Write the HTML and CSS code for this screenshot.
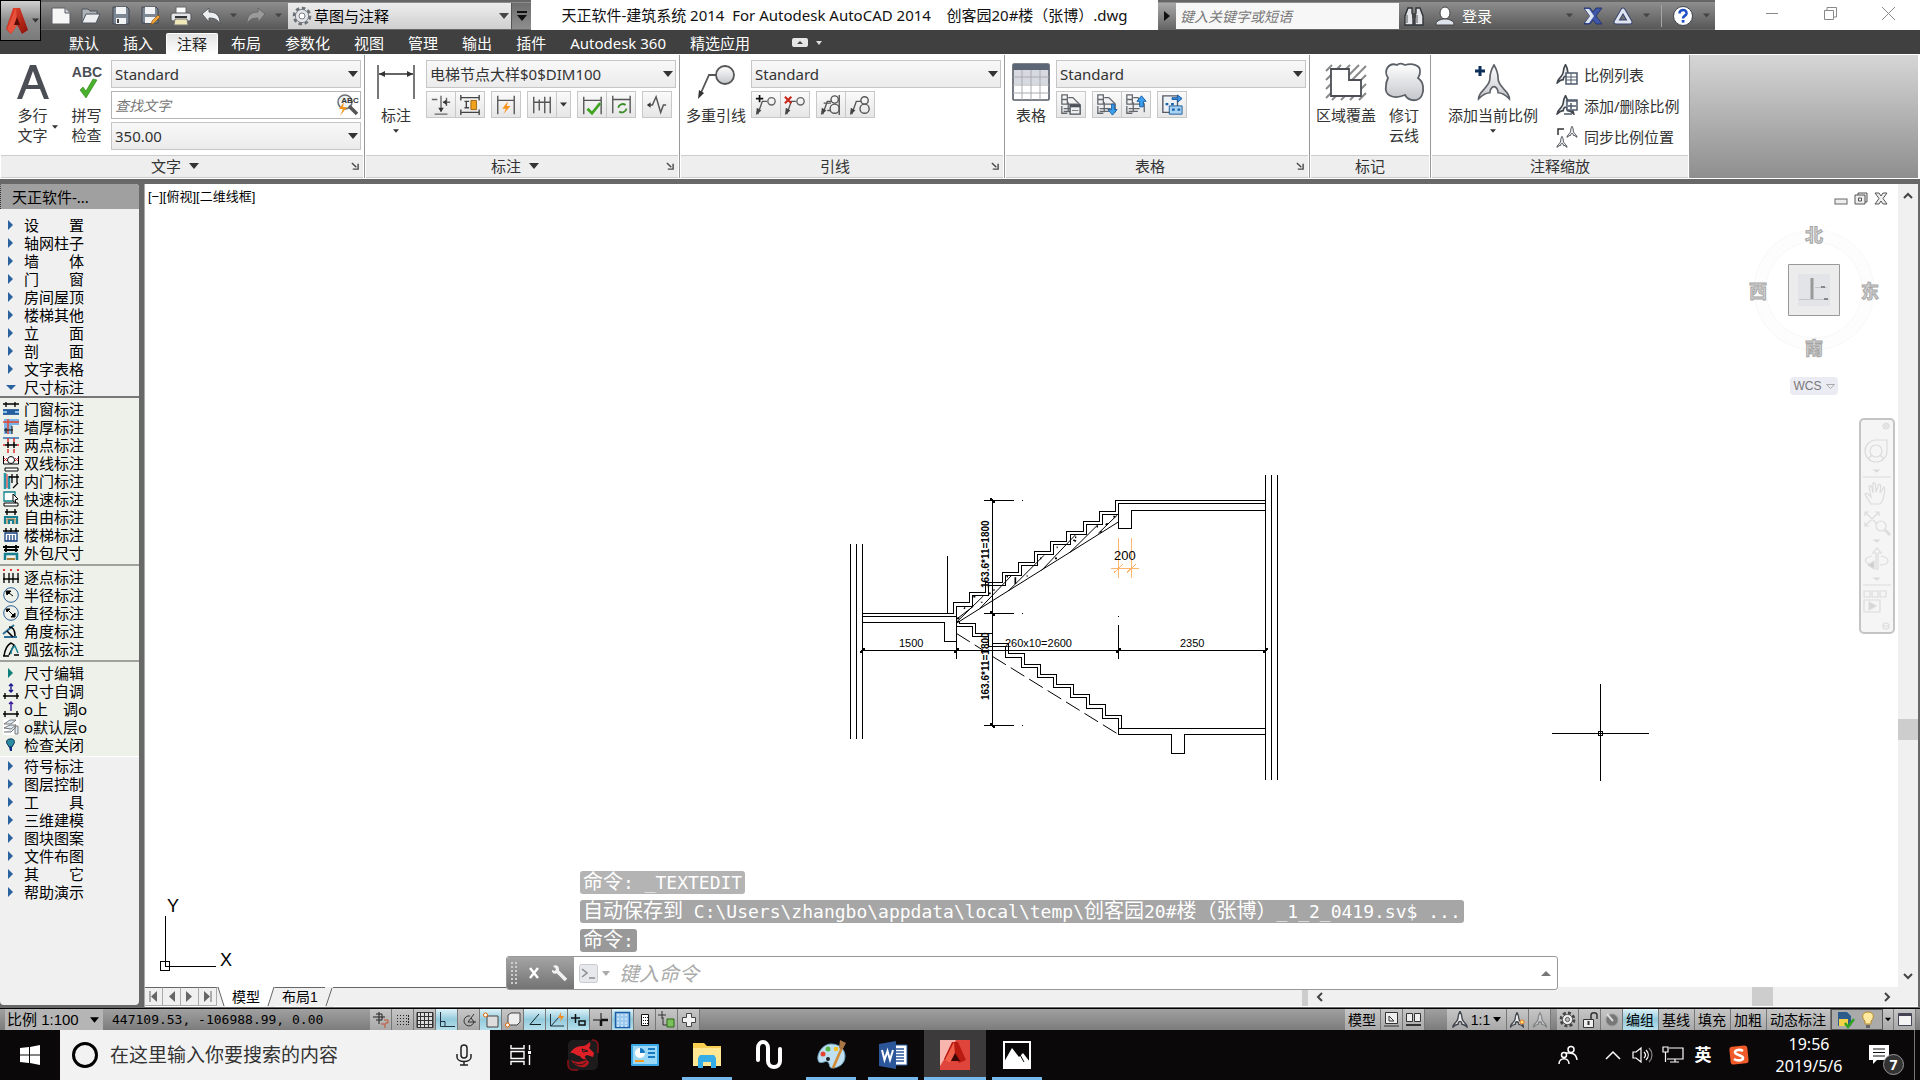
FILE: index.html
```html
<!DOCTYPE html>
<html lang="zh-CN">
<head>
<meta charset="utf-8">
<title>天正软件-建筑系统 2014</title>
<link rel="stylesheet" href="styles.css">
</head>
<body>
<svg class="defs" aria-hidden="true">
  <defs>
    <linearGradient id="steel" x1="0" y1="0" x2="0" y2="1"><stop offset="0" stop-color="#fff"/><stop offset="1" stop-color="#c3c6cb"/></linearGradient>
    <linearGradient id="redg" x1="0" y1="0" x2="1" y2="1"><stop offset="0" stop-color="#ef4a32"/><stop offset="1" stop-color="#8c1008"/></linearGradient>
    <symbol id="down" viewBox="0 0 10 6"><path d="M0 0h10L5 6z" fill="currentColor"/></symbol>
    <symbol id="launch" viewBox="0 0 9 9"><path d="M1 1l5 5M8 2v6H2" fill="none" stroke="#4a4a4a" stroke-width="1.6"/></symbol>
    <symbol id="star" viewBox="0 0 32 36"><path d="M16 1c3 5 4 9 4 13 0 5 3 7 6 11 3 3 5 6 5 9-4-4-8-6-11-6 0-3-2-6-4-6s-4 3-4 6c-3 0-7 2-11 6 0-3 2-6 5-9 3-4 6-6 6-11 0-4 1-8 4-13z" fill="url(#steel)" stroke="#5c6168" stroke-width="1.6"/></symbol>
    <symbol id="star-s" viewBox="0 0 32 36"><path d="M16 1c3 5 4 9 4 13 0 5 3 7 6 11 3 3 5 6 5 9-4-4-8-6-11-6 0-3-2-6-4-6s-4 3-4 6c-3 0-7 2-11 6 0-3 2-6 5-9 3-4 6-6 6-11 0-4 1-8 4-13z" fill="#eceef0" stroke="#42474e" stroke-width="3"/></symbol>
    <symbol id="cells" viewBox="0 0 24 24"><path d="M2 1h6v5H2zM2 6h6v5H2zM9 4h5l7 7v9M8 11h11M2 13v8h6M4 16h12M4 19h10M9 9v11" fill="none" stroke="#62676e" stroke-width="1.4"/></symbol>
    <symbol id="mleader" viewBox="0 0 24 24"><path d="M3 22L8 8h5" fill="none" stroke="#555" stroke-width="1.5"/><path d="M1 23l1-8 5 3z" fill="#444"/></symbol>
  </defs>
</svg>

<header class="titlebar">
  <button class="app-button" aria-label="应用程序菜单">
    <svg width="24" height="28" viewBox="0 0 24 28"><path d="M8 1h7l8 22-6 4-5-9-6 9-5-5z" fill="url(#redg)"/><path d="M11 1L2 22l4 5 6-9z" fill="#e8523c"/><path d="M12 10l3 8H9z" fill="#5a0a05"/></svg>
    <svg class="tiny" width="7" height="5"><use href="#down"/></svg>
  </button>
  <div class="qat">
    <button aria-label="新建"><svg width="20" height="20" viewBox="0 0 20 20"><path d="M1 2h13l5 5v11H1z" fill="#f6f6f6" stroke="#5b5f66"/><path d="M14 2v5h5" fill="#d0d2d6" stroke="#5b5f66"/></svg></button>
    <button aria-label="打开"><svg width="20" height="20" viewBox="0 0 20 20"><path d="M1 16V3h6l2 2h7v3" fill="#aeb3ba" stroke="#4f545b"/><path d="M1 17L5 8h14l-4 9z" fill="#eceef0" stroke="#4f545b"/></svg></button>
    <button aria-label="保存"><svg width="20" height="20" viewBox="0 0 20 20"><path d="M2 1h14l2 2v15H2z" fill="#7d8793" stroke="#3e444d"/><path d="M5 1h10v7H5zM5 12h10v6H5z" fill="#f2f3f5"/><path d="M7 13v4" stroke="#444" stroke-width="2"/></svg></button>
    <button aria-label="另存为"><svg width="20" height="20" viewBox="0 0 20 20"><path d="M1 1h14l2 2v14H1z" fill="#7d8793" stroke="#3e444d"/><path d="M4 1h10v7H4zM4 11h10v6H4z" fill="#f2f3f5"/><path d="M10 19l1-4 6-6 2 2-6 6z" fill="#f4a33a" stroke="#8a5410" stroke-width=".7"/></svg></button>
    <button aria-label="打印"><svg width="22" height="20" viewBox="0 0 22 20"><path d="M6 1h10v7H6z" fill="#fff" stroke="#666"/><rect x="1" y="7" width="20" height="8" rx="2" fill="#e2e4e8" stroke="#555"/><path d="M5 11h12" stroke="#333" stroke-width="2"/><path d="M5 13h12l1 6H4z" fill="#f0e8b8" stroke="#777"/></svg></button>
    <button aria-label="放弃"><svg width="20" height="18" viewBox="0 0 20 18"><path d="M1 7l7-6v4c7 0 11 3 11 12-2-4-5-6-11-6v4z" fill="#eceef0" stroke="#55595f"/></svg></button>
    <svg class="arrow" width="7" height="5"><use href="#down"/></svg>
    <button aria-label="重做"><svg width="20" height="18" viewBox="0 0 20 18"><path d="M19 7l-7-6v4C5 5 1 8 1 17c2-4 5-6 11-6v4z" fill="#9a9a9a" stroke="#686868"/></svg></button>
    <svg class="arrow" width="7" height="5"><use href="#down"/></svg>
    <label class="workspace-pick">
      <svg width="20" height="20" viewBox="0 0 20 20"><circle cx="10" cy="10" r="7.6" fill="#e6e8ea" stroke="#6c7178" stroke-width="3.4" stroke-dasharray="3.4 2.5"/><circle cx="10" cy="10" r="6.6" fill="#e3e5e8" stroke="#7a7f86"/><circle cx="10" cy="10" r="3" fill="#fff" stroke="#7a7f86"/></svg>
      <select aria-label="工作空间"><option>草图与注释</option></select>
      <svg class="sel-arrow" width="10" height="6"><use href="#down"/></svg>
    </label>
    <button class="qat-more" aria-label="自定义"><svg width="10" height="10" viewBox="0 0 10 10"><path d="M0 0h10v2H0zM0 4h10L5 10z" fill="#111"/></svg></button>
  </div>
  <div class="doc-title">天正软件-建筑系统 2014&nbsp; For Autodesk AutoCAD 2014 &nbsp;&nbsp; 创客园20#楼（张博）.dwg</div>
  <div class="infocenter">
    <button class="info-toggle" aria-label="折叠"><svg width="6" height="10" viewBox="0 0 6 10"><path d="M0 0l6 5-6 5z" fill="#111"/></svg></button>
    <input type="text" placeholder="键入关键字或短语" aria-label="键入关键字或短语">
    <button aria-label="搜索"><svg width="22" height="20" viewBox="0 0 22 20"><path d="M5 2h4v5l1 3v9H2v-9zM13 2h4l3 8v9h-8v-9l1-3z" fill="#e2e4e8" stroke="#2f3338" stroke-width="1.4"/><path d="M9 7h4v5H9z" fill="#444"/><path d="M4 9v8M14 9v8" stroke="#555"/></svg></button>
    <button class="login"><svg width="20" height="20" viewBox="0 0 20 20"><ellipse cx="10" cy="7" rx="5" ry="6" fill="#fff" stroke="#444"/><path d="M1 19c0-4 3-5 7-6h4c4 1 7 2 7 6z" fill="#dfe3ee" stroke="#444"/></svg><span>登录</span></button>
    <svg class="arrow" width="7" height="5"><use href="#down"/></svg>
    <button aria-label="Exchange"><svg width="20" height="18" viewBox="0 0 20 18"><path d="M1 1h6l3 4 3-4h6l-6 8 6 8h-6l-3-4-3 4H1l6-8z" fill="#3f57a8" stroke="#27366e"/><path d="M2 2h4l5 7-5 7H2l5-7z" fill="#dfe6f6"/></svg></button>
    <button aria-label="Autodesk 360"><svg width="20" height="20" viewBox="0 0 20 20"><path d="M10 4L3 16h14z" fill="none" stroke="#39456e" stroke-width="5" stroke-linejoin="round"/><path d="M10 4L3 16h14z" fill="none" stroke="#dfe4f0" stroke-width="3" stroke-linejoin="round"/></svg></button>
    <svg class="arrow" width="7" height="5"><use href="#down"/></svg>
    <span class="rule"></span>
    <button aria-label="帮助"><svg width="22" height="22" viewBox="0 0 22 22"><circle cx="11" cy="11" r="9.5" fill="#fff" stroke="#3c414a"/><path d="M7.500 8.500c0-5 7.500-4.500 7 0-.4 2.500-3.500 2.400-3.500 5" fill="none" stroke="#1f4fc4" stroke-width="2.600"/><path d="M9.700 15h2.800v2.600H9.700z" fill="#1f4fc4"/></svg></button>
    <svg class="arrow" width="7" height="5"><use href="#down"/></svg>
  </div>
  <div class="window-buttons">
    <button aria-label="最小化"><svg width="12" height="12"><path d="M0 6.500h12" stroke="#888"/></svg></button>
    <button aria-label="还原"><svg width="13" height="13"><path d="M.5 3.500h9v9h-9zM3 3V.5h9.500V10H10" fill="none" stroke="#888"/></svg></button>
    <button aria-label="关闭"><svg width="13" height="13"><path d="M0 0l13 13M13 0L0 13" stroke="#888"/></svg></button>
  </div>
</header>

<nav class="ribbon-tabs">
  <a href="#">默认</a><a href="#">插入</a><a href="#" class="active">注释</a><a href="#">布局</a><a href="#">参数化</a><a href="#">视图</a><a href="#">管理</a><a href="#">输出</a><a href="#">插件</a><a href="#">Autodesk 360</a><a href="#">精选应用</a>
  <button class="ribbon-min" aria-label="最小化功能区"><svg width="30" height="9" viewBox="0 0 30 9"><rect width="16" height="9" rx="2" fill="#e6e6e6"/><path d="M5 6h6L8 3z" fill="#444"/><path d="M24 3h6l-3 4z" fill="#ddd"/></svg></button>
</nav>

<main class="ribbon">
  <section class="panel">
    <div class="panel-body">
      <button class="big mtext"><svg width="36" height="38" viewBox="0 0 36 38"><path d="M2 36L15 2h6l13 34h-5l-4-10H11L7 36zM13 22h10L18 8z" fill="#4b4f55"/></svg><span>多行<br>文字</span><svg class="side-arrow" width="6" height="4"><use href="#down"/></svg></button>
      <button class="big spell"><svg width="34" height="38" viewBox="0 0 34 38"><path d="M10 27l6 8L27 17l-4-1-7 12-3-4z" fill="#49b02c" stroke="#2d7d18" stroke-width=".6"/><text x="17" y="14" class="abc">ABC</text></svg><span>拼写<br>检查</span></button>
      <div class="stack">
        <label class="combo"><select aria-label="文字样式"><option>Standard</option></select><svg width="10" height="6"><use href="#down"/></svg></label>
        <label class="combo find"><input type="text" placeholder="查找文字" aria-label="查找文字"><svg width="22" height="24" viewBox="0 0 22 24"><circle cx="8" cy="9" r="7" fill="#edf3f3" stroke="#6b7076" stroke-width="1.500"/><path d="M12 13l8 8" stroke="#555" stroke-width="3.500"/><path d="M7 9l-5 7h4l-3 7 7-9H6z" fill="#f7941e"/><text x="13" y="10" class="abc-s">ABC</text></svg></label>
        <label class="combo"><select aria-label="文字高度"><option>350.00</option></select><svg width="10" height="6"><use href="#down"/></svg></label>
      </div>
    </div>
    <h2 class="with-launcher">文字 <svg width="10" height="6"><use href="#down"/></svg><svg class="launcher" width="8" height="8"><use href="#launch"/></svg></h2>
  </section>

  <section class="panel">
    <div class="panel-body">
      <button class="big dimbig"><svg width="38" height="38" viewBox="0 0 38 38"><path d="M1 2v34M37 2v34" stroke="#777" stroke-width="2"/><path d="M2 11h34" stroke="#333" stroke-width="1.500"/><path d="M2 11l6-3v6zM36 11l-6-3v6z" fill="#333"/></svg><span>标注</span><svg width="6" height="4"><use href="#down"/></svg></button>
      <div class="stack">
        <label class="combo"><select aria-label="标注样式"><option>电梯节点大样$0$DIM100</option></select><svg width="10" height="6"><use href="#down"/></svg></label>
        <div class="tools">
          <div class="tool-group">
            <button aria-label="基线"><svg width="22" height="22" viewBox="0 0 24 24"><path d="M2 6h6M12 2v17M14 9h8M18 4v9M5 22h14" stroke="#666" stroke-width="1.500"/><path d="M12 20l-3-5h6zM14 9l4-3v6z" fill="#333"/></svg></button>
            <button aria-label="调整间距"><svg width="22" height="22" viewBox="0 0 24 24"><path d="M2 1v6M22 1v6M2 4h20M2 17v6M22 17v6M2 20h20M6 8h5M6 15h5M8 8v7" stroke="#444" stroke-width="1.500"/><path d="M13 7h6v10h-6z" fill="#f2a31c" stroke="#9a6310"/></svg></button>
          </div>
          <div class="tool-group"><button aria-label="快速标注"><svg width="22" height="22" viewBox="0 0 24 24"><path d="M3 2v20M21 2v20M3 7h18" stroke="#555" stroke-width="1.500"/><path d="M14 8l-6 8h4l-3 6 8-9h-4z" fill="#f7941e"/></svg></button></div>
          <div class="tool-group"><button aria-label="连续"><svg width="22" height="22" viewBox="0 0 24 24"><path d="M3 3v18M9 6v12M15 3v18M21 3v18M3 9h18" stroke="#555" stroke-width="1.500"/></svg></button><button class="slim" aria-label="更多"><svg width="7" height="5"><use href="#down"/></svg></button></div>
          <div class="tool-group">
            <button aria-label="检验"><svg width="22" height="22" viewBox="0 0 24 24"><path d="M3 3v19M22 3v19M3 7h19" stroke="#555" stroke-width="1.500"/><path d="M7 16l5 5 9-11" fill="none" stroke="#3fa521" stroke-width="3"/></svg></button>
            <button aria-label="更新"><svg width="22" height="22" viewBox="0 0 24 24"><path d="M3 2v19M22 2v19M3 6h19" stroke="#555" stroke-width="1.500"/><path d="M9 15a5 5 0 0 1 8-3M18 16a5 5 0 0 1-8 3" fill="none" stroke="#3c8d2a" stroke-width="2"/></svg></button>
          </div>
          <div class="tool-group"><button aria-label="折弯"><svg width="22" height="22" viewBox="0 0 24 24"><path d="M2 12h5l4-9 5 17 3-8h3" fill="none" stroke="#555" stroke-width="1.600"/><path d="M1 12l4-3v6z" fill="#333"/></svg></button></div>
        </div>
      </div>
    </div>
    <h2 class="with-launcher">标注 <svg width="10" height="6"><use href="#down"/></svg><svg class="launcher" width="8" height="8"><use href="#launch"/></svg></h2>
  </section>

  <section class="panel">
    <div class="panel-body">
      <button class="big leader"><svg width="38" height="38" viewBox="0 0 38 38"><path d="M3 32L12 12h7" fill="none" stroke="#555" stroke-width="1.800"/><path d="M1 36l1-9 5 3z" fill="#333"/><circle cx="28" cy="12" r="9" fill="url(#steel)" stroke="#555" stroke-width="1.800"/></svg><span>多重引线</span></button>
      <div class="stack">
        <label class="combo"><select aria-label="引线样式"><option>Standard</option></select><svg width="10" height="6"><use href="#down"/></svg></label>
        <div class="tools">
          <div class="tool-group">
            <button aria-label="添加引线"><svg width="22" height="22" viewBox="0 0 24 24"><use href="#mleader"/><circle cx="18" cy="8" r="4" fill="none" stroke="#666" stroke-width="1.500"/><path d="M1 5h8M5 1v8" stroke="#111" stroke-width="1.800"/></svg></button>
            <button aria-label="删除引线"><svg width="22" height="22" viewBox="0 0 24 24"><use href="#mleader"/><circle cx="18" cy="8" r="4" fill="none" stroke="#666" stroke-width="1.500"/><path d="M1 3l7 7M8 3l-7 7" stroke="#c8281c" stroke-width="2.400"/></svg></button>
          </div>
          <div class="tool-group">
            <button aria-label="对齐"><svg width="22" height="22" viewBox="0 0 24 24"><use href="#mleader"/><circle cx="16" cy="6" r="4" fill="none" stroke="#555" stroke-width="1.500"/><circle cx="16" cy="16" r="5" fill="none" stroke="#555" stroke-width="1.500"/><path d="M21 1v22M4 10h8M8 18h4" stroke="#555" stroke-width="1.500"/></svg></button>
            <button aria-label="合并"><svg width="22" height="22" viewBox="0 0 24 24"><use href="#mleader"/><circle cx="17" cy="7" r="4" fill="none" stroke="#555" stroke-width="1.500"/><circle cx="17" cy="16" r="5" fill="none" stroke="#555" stroke-width="1.500"/></svg></button>
          </div>
        </div>
      </div>
    </div>
    <h2 class="with-launcher">引线<svg class="launcher" width="8" height="8"><use href="#launch"/></svg></h2>
  </section>

  <section class="panel">
    <div class="panel-body">
      <button class="big tbl"><svg width="38" height="38" viewBox="0 0 38 38"><rect x="1" y="1" width="36" height="36" rx="1" fill="#fff" stroke="#555b66" stroke-width="1.600"/><path d="M1 1h36v6H1z" fill="#5d6676"/><path d="M2 7h34v14H2z" fill="#d6d9df"/><path d="M10 7v30M19 7v30M28 7v30M1 14h36M1 22h36M1 30h36" stroke="#a9abb0"/></svg><span>表格</span></button>
      <div class="stack">
        <label class="combo"><select aria-label="表格样式"><option>Standard</option></select><svg width="10" height="6"><use href="#down"/></svg></label>
        <div class="tools">
          <div class="tool-group"><button aria-label="提取数据"><svg width="22" height="22" viewBox="0 0 24 24"><use href="#cells"/><path d="M11 12h11v10H11z" fill="#eef0f2" stroke="#4d535c" stroke-width="1.500"/><path d="M11 13h11" stroke="#4d535c" stroke-width="3"/><path d="M13 18h7" stroke="#777"/></svg></button></div>
          <div class="tool-group">
            <button aria-label="从源下载"><svg width="22" height="22" viewBox="0 0 24 24"><use href="#cells"/><path d="M17 11h3v6h3l-5 6-5-6h4z" fill="#3aa0f0" stroke="#145a9e"/></svg></button>
            <button aria-label="上载到源"><svg width="22" height="22" viewBox="0 0 24 24"><use href="#cells"/><path d="M16 14h4V8h3l-5-6-5 6h3z" fill="#3aa0f0" stroke="#145a9e"/></svg></button>
          </div>
          <div class="tool-group"><button aria-label="链接数据"><svg width="22" height="22" viewBox="0 0 24 24"><path d="M2 2h16v18H2z" fill="#eef2f6" stroke="#555b66" stroke-width="1.500"/><path d="M9 13h14v9H9z" fill="#a9d3f5" stroke="#17558f"/><path d="M12 4h6V1l5 4-5 4V6h-6z" fill="#3a8fe0" stroke="#145a9e"/><path d="M12 17h3M18 17h3M5 11h3M11 11h3" stroke="#1763a8" stroke-width="2.500"/></svg></button></div>
        </div>
      </div>
    </div>
    <h2 class="with-launcher">表格<svg class="launcher" width="8" height="8"><use href="#launch"/></svg></h2>
  </section>

  <section class="panel">
    <div class="panel-body">
      <button class="big wipe"><svg width="40" height="38" viewBox="0 0 40 38"><path d="M0 8l6-6M0 17L15 2M0 26L24 2M0 35L33 2M6 37L40 3M15 37l25-25M24 37l16-16M33 37l7-7" stroke="#8a8a8a" stroke-width="2"/><path d="M5 6h18v11h12v16H5z" fill="#fff" stroke="#4b4f55" stroke-width="1.800"/></svg><span>区域覆盖</span></button>
      <button class="big cloud"><svg width="40" height="40" viewBox="0 0 40 40"><path d="M4 16C-1 8 5 0 13 3c3-3 6-1 8 0 7-2 16 0 15 7 0 3-1 4-2 6 6 4 6 12 4 17-3 7-13 7-17 0C9 38 0 33 2 24c0-4 1-6 2-8z" fill="url(#steel)" stroke="#5c6168" stroke-width="1.800"/></svg><span>修订<br>云线</span></button>
    </div>
    <h2>标记</h2>
  </section>

  <section class="panel">
    <div class="panel-body">
      <button class="big scale-add"><svg width="38" height="38" viewBox="0 0 38 38"><svg x="3" y="1" width="34" height="37"><use href="#star"/></svg><path d="M1 8h10M6 3v10" stroke="#0d2f5c" stroke-width="3"/></svg><span>添加当前比例</span><svg width="6" height="4"><use href="#down"/></svg></button>
      <div class="rows">
        <button><svg width="22" height="22" viewBox="0 0 22 22"><svg width="19" height="20"><use href="#star-s"/></svg><path d="M10 9h11v11H10z" fill="#fff" stroke="#4d5a6b" stroke-width="1.500"/><path d="M10 13h11M10 16h11M15 9v11" stroke="#4d5a6b"/></svg><span>比例列表</span></button>
        <button><svg width="22" height="22" viewBox="0 0 22 22"><svg width="19" height="20"><use href="#star-s"/></svg><path d="M11 5h10v10H11z" fill="#fff" stroke="#4d5a6b" stroke-width="1.500"/><path d="M11 6h10M12 11h8M15 8v6M8 19h8" stroke="#4d5a6b" stroke-width="1.500"/></svg><span>添加/删除比例</span></button>
        <button><svg width="22" height="22" viewBox="0 0 22 22"><svg x="10" y="0" width="12" height="12"><use href="#star-s"/></svg><svg x="0" y="10" width="12" height="12"><use href="#star-s"/></svg><path d="M2 9V3h6" fill="none" stroke="#333" stroke-width="1.500"/></svg><span>同步比例位置</span></button>
      </div>
    </div>
    <h2>注释缩放</h2>
  </section>
  <div class="ribbon-rest"></div>
</main>

<div class="workspace">
  <aside class="palette">
    <h3>天正软件-...</h3>
    <div class="tree">
      <button>设　　置</button><button>轴网柱子</button><button>墙　　体</button><button>门　　窗</button><button>房间屋顶</button><button>楼梯其他</button><button>立　　面</button><button>剖　　面</button><button>文字表格</button><button class="open">尺寸标注</button>
    </div>
    <div class="commands">
      <div class="set">
        <button><svg width="16" height="16" viewBox="0 0 16 16"><path d="M0 3h16M3 1v5M12 1v5" stroke="#000" fill="none" stroke-width="1.300"/><path d="M0 9h16v4H0z" fill="#8cc0ea"/><path d="M0 9h16M0 13h16M4 11h8" stroke="#023e86" stroke-width="1.500"/></svg>门窗标注</button>
        <button><svg width="16" height="16" viewBox="0 0 16 16"><path d="M1 0h15v6H9v9H1z" fill="#7ab4e6"/><path d="M0 3h16M5 0v15" stroke="#e8432c" stroke-width="1.400"/><path d="M1 11h9M3 9v5M9 7v8" stroke="#111"/></svg>墙厚标注</button>
        <button><svg width="16" height="16" viewBox="0 0 16 16"><path d="M0 1h16" stroke="#2a72b8" stroke-width="1.500"/><path d="M5 1v4M11 1v4M5 12v4M11 12v4M0 8h2M14 8h2" stroke="#d22" stroke-width="1.400"/><path d="M2 8h12M5 5v6M11 5v6" stroke="#000" stroke-width="1.500"/></svg>两点标注</button>
        <button><svg width="16" height="16" viewBox="0 0 16 16"><path d="M.5 1v8h15V1M2 13h13v3H2z" fill="#fff" stroke="#000"/><circle cx="8" cy="5" r="3.500" fill="#fff" stroke="#000"/><path d="M1 3l3 3M4 3L1 6M12 3l3 3M15 3l-3 3" stroke="#d22"/></svg>双线标注</button>
        <button><svg width="16" height="16" viewBox="0 0 16 16"><path d="M2 0v16M6 3v13" stroke="#2395a9" stroke-width="2.500"/><path d="M4 1v14" stroke="#d22"/><path d="M6 4h10M9 1v9M14 1v9M15 10l-5 5" stroke="#000" stroke-width="1.300"/></svg>内门标注</button>
        <button><svg width="16" height="16" viewBox="0 0 16 16"><path d="M1 1h11v9H1z" fill="#fff" stroke="#0d7f87" stroke-width="1.300"/><path d="M1 12h14v3H1z" fill="#fff" stroke="#000"/><path d="M10 3l5 5-3 1 1 3-3-2z" fill="#fff" stroke="#000"/></svg>快速标注</button>
        <button><svg width="16" height="16" viewBox="0 0 16 16"><path d="M2 3h12M4 0v6M12 0v6" stroke="#000" stroke-width="1.400"/><path d="M2 15V8h12v7M6 15v-4h4v4" fill="none" stroke="#187f93" stroke-width="2.200"/><path d="M4 15v-5h8v5" fill="none" stroke="#a77a36"/></svg>自由标注</button>
        <button><svg width="16" height="16" viewBox="0 0 16 16"><path d="M0 4h16M3 1v4M8 1v4M13 1v4" stroke="#000" stroke-width="1.400"/><path d="M2 6h12v8H2zM5 8v6M8 8v6M11 8v6" fill="#fff" stroke="#123d80" stroke-width="1.300"/></svg>楼梯标注</button>
        <button><svg width="16" height="16" viewBox="0 0 16 16"><path d="M0 2h16M1 5h14M3 0v7M13 0v7" stroke="#000" stroke-width="1.800"/><path d="M2 15V9h12v6" fill="none" stroke="#187f93" stroke-width="2.500"/><path d="M4 14h8" stroke="#a77a36" stroke-width="2"/></svg>外包尺寸</button>
      </div>
      <div class="set">
        <button><svg width="16" height="16" viewBox="0 0 16 16"><path d="M0 1h2M7 1h2M14 1h2" stroke="#e33" stroke-width="2"/><path d="M1 4v10M6 4v10M10 4v10M15 4v10M0 10h16" stroke="#000" stroke-width="1.300"/></svg>逐点标注</button>
        <button><svg width="16" height="16" viewBox="0 0 16 16"><circle cx="8" cy="8" r="7.300" fill="none" stroke="#2b5f96"/><path d="M3 4h5L4 8zM6 6l4 3" fill="#000" stroke="#000"/></svg>半径标注</button>
        <button><svg width="16" height="16" viewBox="0 0 16 16"><circle cx="8" cy="8" r="7.300" fill="none" stroke="#2b5f96"/><path d="M3 4h4L4 7zM12 12H8l4-4zM5 5l6 6" fill="#000" stroke="#000"/></svg>直径标注</button>
        <button><svg width="16" height="16" viewBox="0 0 16 16"><path d="M0 11l11-9M1 14h13" stroke="#2b6f96" stroke-width="2"/><path d="M6 4c5 0 6 4 6 9M4 8l6 6" fill="none" stroke="#000" stroke-width="1.500"/></svg>角度标注</button>
        <button><svg width="16" height="16" viewBox="0 0 16 16"><path d="M1 15C2 8 4 4 8 2l3 2L6 14" fill="none" stroke="#000" stroke-width="1.500"/><path d="M8 13c0-4 2-7 4-8l3 7" fill="none" stroke="#187f93" stroke-width="1.500"/><path d="M0 15h6M11 14h5" stroke="#000" stroke-width="1.500"/></svg>弧弦标注</button>
      </div>
      <div class="set">
        <button class="sub">尺寸编辑</button>
        <button><svg width="16" height="16" viewBox="0 0 16 16"><path d="M0 13h16M2 10v6M14 10v6" stroke="#000" stroke-width="1.400"/><path d="M8 1v8M6 3l2-2 2 2M6 7l2 2 2-2" fill="none" stroke="#1a1a8c" stroke-width="1.400"/></svg>尺寸自调</button>
        <button><svg width="16" height="16" viewBox="0 0 16 16"><path d="M0 13h16M2 10v6M14 10v6" stroke="#000" stroke-width="1.400"/><path d="M8 1v9M6 3l2-2 2 2" fill="none" stroke="#3a1a9c" stroke-width="1.400"/></svg>o上　调o</button>
        <button><svg width="16" height="16" viewBox="0 0 16 16"><path d="M0 0h16v16H0z" fill="#fff"/><path d="M1 5l6-4h6l-5 4zM1 9l6-3h6l-5 4zM1 13h7l5-5M12 7h3v8h-3z" fill="#dceaf3" stroke="#777"/></svg>o默认层o</button>
        <button><svg width="16" height="16" viewBox="0 0 16 16"><path d="M7 2c4-1 6 3 3 6l-1 2H6L5 8C2 5 4 2 7 2z" fill="#2a8ea0" stroke="#0b2d55"/><path d="M6 10h3v4H7z" fill="#0b2d8c"/></svg>检查关闭</button>
      </div>
    </div>
    <div class="tree lower">
      <button>符号标注</button><button>图层控制</button><button>工　　具</button><button>三维建模</button><button>图块图案</button><button>文件布图</button><button>其　　它</button><button>帮助演示</button>
    </div>
  </aside>

  <div class="document">
    <div class="view-row">
      <div class="canvas">
        <div class="viewport-label">[−][俯视][二维线框]</div>

        <svg class="stair" width="460" height="330" viewBox="0 0 460 330">
          <svg width="460" height="330" viewBox="0 0 1380 990">
            <g class="line">
              <path d="M31.500 252v585M49.500 252v585M67.500 252v585M1276.500 45v915M1294.500 45v915M1312.500 45v915"/>
              <path d="M322.500 288v172M67 460.500H340.500V427.500H388.500V397.500H436.500V367.500H487.500V337.500H535.500V307.500H583.500V274.500H631.500V244.500H679.500V214.500H730.500V184.500H778.500V154.500H826.500V121.500H1276"/>
              <path d="M67 469.500H349.500V439.500H397.500V406.500H445.500V376.500H496.500V346.500H544.500V316.500H592.500V283.500H640.500V253.500H691.500V223.500H739.500V193.500H787.500V163.500H835.500V130.500H1276"/>
              <path d="M67 487.500H313.500V544.500H349.500V469M835.500 130V205.500H874.500V151.500H1276"/>
              <path d="M349.500 484.500H358.500V490.500H406.500V520.500H457M349.500 499.500H397.500V529.500H445.500V559.500H496.500V592.500H544.500V622.500H592.500V652.500H640.500V682.500H691.500V712.500H739.500V745.500H787.500V775.500H835.500V823.500H994.500V880.500H1033.500V823.500H1276"/>
              <path d="M457 550.500H505.500V580.500H553.500V613.500H601.500V643.500H649.500V673.500H700.500V703.500H748.500V733.500H796.500V766.500H844.500V805.500H1276M835 805.500h10"/>
              <path d="M67 571.500H1276M349.500 544v53M835.500 495v102M457.500 121V796M432 121.500h90M432 460.500h90M432 796.500h90M546 121.500h3M546 460.500h3M546 796.500h3M834 469.500h4"/>
              <path d="M451 115l13 13M451 454l13 13M451 790l13 13M61 578l13-13M343 578l13-13M829 578l13-13M1270 578l13-13" stroke-width="6"/>
            </g>
            <g class="slope">
              <path d="M349 490L835 186M349 478L400 439M349 487L430 408M420 445L515 346M505 393L612 286M605 331L706 225M690 277L775 193M775 220L832 165"/>
              <path d="M349 520L430 571M457 589L835 823" stroke-dasharray="48 17"/>
              <path d="M372 443l3 3M400 410h6M446 400h6M460 390h4M425 425v3M500 350h4M526 352v20M560 348h3M600 295h4M645 295h6M650 262h3M700 240l8 4M705 232h4M770 200h4M797 195l6-5M820 170h6M350 475h8M780 216h6" stroke-width="5"/>
            </g>
            <path class="edit" d="M835.500 234v120M874.500 234v120M813 325.500h84M823 337l26-24M861 337l26-24"/>
          </svg>
          <g class="dims">
            <text x="59" y="187">1500</text><text x="165" y="187">260x10=2600</text><text x="340" y="187">2350</text>
            <text transform="translate(149 128) rotate(-90)" class="vert">163.6*11=1800</text>
            <text transform="translate(149 240) rotate(-90)" class="vert">163.6*11=1800</text>
            <text x="274" y="100" class="wide">200</text>
          </g>
        </svg>

        <svg class="crosshair" width="97" height="97"><path d="M48.500 0v97M0 49.500h97M46.500 47.500h4v4h-4z"/></svg>

        <svg class="ucs" width="84" height="84"><path d="M10.500 24v50M10 74.500h51M5.500 69.500h9v9h-9z"/><text x="12" y="20">Y</text><text x="65" y="74">X</text></svg>

        <div class="doc-buttons">
          <button aria-label="最小化视口"><svg width="14" height="13" viewBox="0 0 14 13"><rect x="1" y="7" width="12" height="5" fill="#eee" stroke="#666"/></svg></button>
          <button aria-label="还原视口"><svg width="14" height="13" viewBox="0 0 14 13"><path d="M4 3V1h9v9h-2M1 3h10v9H1z" fill="#eee" stroke="#555"/><path d="M4.500 6h3v3h-3z" fill="#eee" stroke="#555"/></svg></button>
          <button aria-label="关闭视口"><svg width="14" height="13" viewBox="0 0 14 13"><path d="M1 1h4l2 3 2-3h4L9 6.500l4 5.500H9L7 9l-2 3H1l4-5.500z" fill="#eee" stroke="#555"/></svg></button>
        </div>

        <div class="viewcube">
          <svg width="130" height="136" viewBox="0 0 130 136"><circle cx="65" cy="68" r="54" fill="none" stroke="#f8f8f8" stroke-width="13"/><circle cx="65" cy="68" r="54" fill="none" stroke="#fdfdfd" stroke-width="11"/><path d="M39.500 42.500h51v51h-51z" fill="#ececec" stroke="#999"/><path d="M49 52h32v32H49z" fill="#e2e4e8"/><path d="M63 56v21" stroke="#999" stroke-width="3"/><path d="M50 77.500h30M66 65.500h12" stroke="#c4c6ca"/><path d="M72 65h4M75 77h4" stroke="#888" stroke-width="2"/><g class="compass"><text x="65" y="20">北</text><text x="9" y="76">西</text><text x="121" y="76">东</text><text x="65" y="133">南</text></g></svg>
          <button class="wcs">WCS <svg width="9" height="5" viewBox="0 0 9 5"><path d="M.5.5h8l-4 4z" fill="none" stroke="#aaa"/></svg></button>
        </div>

        <div class="navbar">
          <svg width="28" height="208" viewBox="0 0 28 208" fill="none" stroke="#dcdcdc" stroke-width="1.200"><circle cx="23" cy="4" r="3"/><path d="M21 2l4 4M25 2l-4 4"/><path d="M13 18h11v11a11 11 0 1 1-11-11z"/><circle cx="13" cy="29" r="6"/><path d="M9 33l-4 4M17 33l4 4M0 55h28M0 163h28"/><path d="M11 48h5l-2 2zM11 118h5l-2 2zM11 156h5l-2 2z" fill="#ccc"/><path d="M8 82c-3-5-6-9-6-10 2-2 4 1 6 3L6 64c2-1 3 0 4 7V61c2-1 3 0 3 9l3-8c2 0 2 2 1 9l4-6c2 1 0 7-1 13l-3 4z"/><path d="M2 90l14 14M16 90L2 104M2 94v-4h4M12 90h4v4M2 100v4h4"/><circle cx="18" cy="104" r="5" fill="#f5f5f5"/><path d="M22 108l5 5" stroke-width="3"/><path d="M13 147v-16h-3l4-5 4 5h-3v16z"/><path d="M9 134c-10 2-8 8 2 9M18 134c10 2 9 9-1 9"/><path d="M11 139v8l-6-4z" fill="#ccc"/><path d="M1 169h6v6H1zM9 169h6v6H9zM17 169h6v6h-6zM1 178h16v12H1z"/><path d="M6 180v8l7-4z" fill="#d6d6d6"/><circle cx="23" cy="204" r="3"/><path d="M21 204h4"/></svg>
        </div>

        <div class="history">
          <p class="h1"><b>命令</b>: _TEXTEDIT</p>
          <p class="h2"><b>自动保存到</b> C:\Users\zhangbo\appdata\local\temp\<b>创客园</b>20#<b>楼（张博）</b>_1_2_0419.sv$ ...</p>
          <p class="h3"><b>命令</b>:</p>
        </div>

        <div class="command-line">
          <div class="command-grip">
            <svg width="6" height="22" viewBox="0 0 6 22"><path d="M1 0v22M5 0v22" stroke="#ccc" stroke-width="2" stroke-dasharray="2 2"/></svg>
            <button aria-label="关闭"><svg width="12" height="12" viewBox="0 0 12 12"><path d="M2 1l8 10M10 1L2 11" stroke="#fff" stroke-width="2.400"/></svg></button>
            <button aria-label="自定义"><svg width="18" height="18" viewBox="0 0 18 18"><path d="M7 7l9 9" stroke="#f2f2f2" stroke-width="3.500"/><path d="M3 2l3 3-1 2-3-1c-1 5 8 5 7-1C9 2 6 0 3 2z" fill="#f2f2f2"/></svg></button>
          </div>
          <svg class="prompt" width="19" height="19" viewBox="0 0 19 19"><rect x=".5" y=".5" width="18" height="18" rx="2" fill="#e6e8ec" stroke="#c9cbd0"/><path d="M3 5l5 4-5 4M10 14h6" fill="none" stroke="#8a8d92" stroke-width="1.600"/></svg>
          <svg class="faint" width="8" height="5"><use href="#down"/></svg>
          <input type="text" placeholder="键入命令" aria-label="键入命令">
          <button aria-label="历史记录"><svg width="10" height="5" viewBox="0 0 10 5"><path d="M0 5h10L5 0z" fill="#777"/></svg></button>
        </div>
      </div>
      <div class="vscroll">
        <button aria-label="上"><svg width="10" height="7"><path d="M1 6l4-4 4 4" /></svg></button><i class="before"></i><i class="thumb"></i><i class="after"></i><button aria-label="下"><svg width="10" height="7"><path d="M1 1l4 4 4-4"/></svg></button>
      </div>
    </div>
    <div class="sheet-row">
      <button class="nav" aria-label="第一个"><svg width="9" height="11"><path d="M1 0v11" stroke="#666"/><path d="M8 0v11L2 5.500z" fill="#666"/></svg></button><button class="nav" aria-label="上一个"><svg width="9" height="11"><path d="M8 0v11L2 5.500z" fill="#666"/></svg></button><button class="nav" aria-label="下一个"><svg width="9" height="11"><path d="M1 0v11l6-5.500z" fill="#666"/></svg></button><button class="nav" aria-label="最后一个"><svg width="9" height="11"><path d="M8 0v11" stroke="#666"/><path d="M1 0v11l6-5.500z" fill="#666"/></svg></button>
      <svg class="edge" width="8" height="20"><path d="M1 0l6 18h1V0z" fill="#fff"/><path d="M0 0h1l6 19" fill="none" stroke="#666"/></svg><button class="sheet current">模型</button><svg class="edge" width="8" height="20"><path d="M0 0h7L1 18H0z" fill="#fff"/><path d="M1 19L7 0h1" fill="none" stroke="#666"/></svg><button class="sheet">布局1</button><svg class="edge" width="8" height="20"><path d="M1 19L7 1" fill="none" stroke="#666"/></svg>
      <div class="sheet-gap"></div>
      <div class="hscroll"><i class="split"></i><button aria-label="左"><svg width="7" height="10"><path d="M6 1L2 5l4 4"/></svg></button><i class="before"></i><i class="thumb"></i><i class="after"></i><button aria-label="右"><svg width="7" height="10"><path d="M1 1l4 4-4 4"/></svg></button></div>
    </div>
  </div>
</div>

<div class="statusbar">
  <button class="scale">比例 1:100 <svg width="9" height="6"><use href="#down"/></svg></button>
  <output>447109.53, -106988.99, 0.00</output>
  <div class="toggles">
    <button aria-label="推断约束"><svg width="16" height="16"><path d="M0 5h12M6 0v12M3 2h6v6H3" fill="none" stroke="#222"/><path d="M11 8h4v3h-3M8 12h4v4" fill="none" stroke="#c0532a"/></svg></button>
    <button aria-label="捕捉"><svg width="16" height="16"><path d="M2 3.500h10M2 6.500h10M2 9.500h10M2 12.500h10" stroke="#222" stroke-dasharray="1 2"/><path d="M13.500 3v10" stroke="#222" stroke-dasharray="2 1"/></svg></button>
    <button aria-label="栅格"><svg width="16" height="16"><path d="M0 .5h16v15H0zM3.500 0v16M7.500 0v16M11.500 0v16M15.500 0v16M.5 0v16M0 4.500h16M0 8.500h16M0 12.500h16" fill="#ddd" stroke="#333"/></svg></button>
    <button class="on" aria-label="正交"><svg width="16" height="16"><path d="M1.500 0v14.500H16M1 9.500h5V14" fill="none" stroke="#234"/></svg></button>
    <button aria-label="极轴"><svg width="16" height="16"><path d="M13 9a5 5 0 1 1-4-5M7 10l6-8M7 10h8M10 6l3 4" fill="none" stroke="#333"/></svg></button>
    <button class="on" aria-label="对象捕捉"><svg width="16" height="16"><path d="M4 4h11v11H4z" fill="#ddd" stroke="#444"/><circle cx="2.500" cy="3" r="2" fill="#fff" stroke="#d60"/></svg></button>
    <button aria-label="三维捕捉"><svg width="16" height="16"><path d="M3 3l3-2h9v9l-3 3H3z" fill="#eee" stroke="#444"/><circle cx="2.500" cy="13" r="2" fill="#fff" stroke="#d60"/></svg></button>
    <button class="on" aria-label="对象追踪"><svg width="16" height="16"><path d="M12 2L3 12.500h11" fill="none" stroke="#122"/></svg></button>
    <button class="on" aria-label="动态UCS"><svg width="16" height="16"><path d="M1.500 2v12H15M2 14l8-9" fill="none" stroke="#234"/><path d="M12 0L9 6h3l-1 4 4-6h-3z" fill="#f28b1e"/></svg></button>
    <button class="on" aria-label="动态输入"><svg width="16" height="16"><path d="M0 6h9M4.500 2v9M8 9h6v4H8z" fill="none" stroke="#111" stroke-width="1.500"/></svg></button>
    <button aria-label="线宽"><svg width="16" height="16"><path d="M0 8h7M8 1v7" stroke="#111"/><path d="M8 8v6M8 8h7" stroke="#111" stroke-width="2.500"/></svg></button>
    <button class="on" aria-label="透明度"><svg width="18" height="18"><path d="M1.500 1.500h14v15h-14z" fill="#9cc9ee" stroke="#1c5fa8" stroke-width="1.500"/><path d="M3 4h12M3 8h12M3 12h12M3 15h12" stroke="#c5e0f6" stroke-width="2" stroke-dasharray="2 2"/></svg></button>
    <button aria-label="快捷特性"><svg width="16" height="16"><path d="M4.500 2.500h7v11h-7z" fill="#fff" stroke="#111"/><path d="M6 5.500h5M6 8.500h5M6 11.500h5" stroke="#111" stroke-dasharray="1 1"/></svg></button>
    <button aria-label="选择循环"><svg width="18" height="18"><path d="M0 4h8M4 0v8M5 6V14h5" fill="none" stroke="#333"/><path d="M9 8h7v8H9z" fill="#7bc05a" stroke="#2d6617"/></svg></button>
    <button aria-label="注释监视器"><svg width="16" height="16"><path d="M5.500 1.500h5v4h4v5h-4v4h-5v-4h-4v-5h4z" fill="#f2f2f2" stroke="#444"/></svg></button>
  </div>
  <div class="status-fill"></div>
  <div class="toggles right">
    <button class="word">模型</button>
    <button aria-label="布局"><svg width="16" height="16"><path d="M1.500.5h12v11h-12z" fill="#eee" stroke="#333"/><path d="M5 4v5h5zM0 14h15" fill="none" stroke="#333"/></svg></button>
    <button aria-label="视图"><svg width="16" height="16"><path d="M.5 1.500h6v8h-6zM8.500 1.500h6v8h-6z" fill="#eee" stroke="#333"/><path d="M0 13h15" stroke="#333" stroke-width="2"/></svg></button>
    <span class="gap wide"></span>
    <button class="anno"><svg width="16" height="17"><use href="#star-s"/></svg>1:1 <svg width="8" height="5"><use href="#down"/></svg></button>
    <button aria-label="注释可见性"><svg width="16" height="16"><svg width="14" height="16"><use href="#star-s"/></svg><circle cx="12" cy="10" r="2" fill="#ffe08a" stroke="#e57a18"/></svg></button>
    <button class="dim" aria-label="自动添加"><svg width="14" height="16"><use href="#star-s"/></svg></button>
    <span class="gap"></span>
    <button aria-label="工作空间"><svg width="17" height="17" viewBox="0 0 20 20"><circle cx="10" cy="10" r="7.600" fill="none" stroke="#444" stroke-width="3.400" stroke-dasharray="3.400 2.500"/><circle cx="10" cy="10" r="6" fill="#eee" stroke="#444"/><circle cx="10" cy="10" r="2.500" fill="#bbb" stroke="#444"/></svg></button>
    <button aria-label="锁定"><svg width="16" height="16"><path d="M9 7V3c0-3 6-3 6 0v4" fill="none" stroke="#333" stroke-width="1.500"/><path d="M1.500 7.500h10v8h-10z" fill="#eee" stroke="#333"/><path d="M6.500 9v4" stroke="#333" stroke-width="2"/></svg></button>
    <button aria-label="硬件加速"><svg width="16" height="16"><circle cx="8" cy="8" r="6" fill="#777" stroke="#999"/><path d="M3 2l6 7" stroke="#ddd" stroke-width="2"/></svg></button>
    <button class="word on">编组</button><button class="word">基线</button><button class="word">填充</button><button class="word">加粗</button><button class="word">动态标注</button>
    <span class="tray"><svg width="18" height="18"><path d="M1 1h9l4 4v10H1z" fill="#2d5c8c"/><path d="M2 8h9v7H2z" fill="#f4d347"/><path d="M8 12l3 4 6-8" fill="none" stroke="#2fa321" stroke-width="2.500"/></svg><svg width="14" height="18"><path d="M7 1c7 0 6 7 3 9v3H4v-3C1 8 0 1 7 1z" fill="#ffe9a0" stroke="#b58a2c"/><path d="M5 14h4v3H5z" fill="#666"/></svg></span>
    <button class="slim" aria-label="状态栏菜单"><svg width="6" height="5"><use href="#down"/></svg></button>
    <button aria-label="全屏显示"><svg width="16" height="16"><path d="M1.500 1.500h13v12h-13z" fill="#f4f4f4" stroke="#445"/><path d="M1 3h14" stroke="#445" stroke-width="2"/></svg></button>
  </div>
</div>

<footer class="taskbar">
  <button class="start" aria-label="开始"><svg width="20" height="20" viewBox="0 0 20 20"><path d="M0 3l9-1v7.500H0zM10 2l10-2v9.500H10zM0 10.500h9V18l-9-1zM10 10.500h10V20l-10-2z" fill="#fff"/></svg></button>
  <label class="search"><svg width="28" height="28"><circle cx="14" cy="14" r="11.500" fill="none" stroke="#000" stroke-width="3"/></svg><input type="text" placeholder="在这里输入你要搜索的内容" aria-label="搜索"><svg width="16" height="22" viewBox="0 0 16 22"><rect x="5" y="1" width="6" height="13" rx="3" fill="none" stroke="#222" stroke-width="1.500"/><path d="M1 10v3c0 6 14 6 14 0v-3M8 18v3M4 21h8" fill="none" stroke="#222" stroke-width="1.500"/></svg></label>
  <div class="apps">
    <button aria-label="任务视图"><svg width="22" height="20"><path d="M1 0v3.500h13V0M1 6.500h13v7H1zM1 20v-3.500h13V20M19.500 0v5M19.500 10v10" fill="none" stroke="#fff" stroke-width="1.400"/><path d="M18 6h3v3h-3z" fill="#fff"/></svg></button>
    <button aria-label="Dragon"><svg width="30" height="30" viewBox="0 0 30 30"><rect width="30" height="30" rx="5" fill="#1d1b1c"/><path d="M24 0h1a5 5 0 0 1 5 5v8M0 20v5a5 5 0 0 0 5 5h5" fill="none" stroke="#8e1117" stroke-width="1.500"/><path d="M2 13c3-4 6-7 12-7 4 0 5-2 8-4 1 3 0 4-1 6l5 5-1 4-6-2c-3 1-3 3 0 4-4 1-6-1-7-3-4 0-6-4-10-3z" fill="#df2127"/><path d="M3 20c5 3 10 2 15 0 4 1 4 4-1 7-6 1-11-2-14-7z" fill="#b3181e"/><path d="M14 9l6 2-5 1zM6 23c5 3 9 2 12-1" fill="none" stroke="#1d1b1c"/></svg></button>
    <button aria-label="控制面板"><svg width="28" height="22" viewBox="0 0 28 22"><rect width="28" height="22" rx="1" fill="#3aa7e6"/><rect x="2" y="2" width="24" height="18" fill="#9bd8f8"/><circle cx="9" cy="9" r="5" fill="#fff"/><path d="M9 9V4a5 5 0 0 1 5 5z" fill="#1679c4"/><path d="M17 5h7M17 9h7M17 13h7" stroke="#1679c4" stroke-width="2"/><path d="M4 17h9" stroke="#f39c22" stroke-width="2"/></svg></button>
    <button class="running" aria-label="文件资源管理器"><svg width="28" height="26" viewBox="0 0 28 26"><path d="M0 1h11l3 3h14v20H0z" fill="#f7cf52"/><path d="M0 6h28v18H0z" fill="#ffe793"/><path d="M5 24v-8l2-3h14l2 3v10h-5v-6h-8v6H5z" fill="#35aee8"/></svg></button>
    <button aria-label="N"><svg width="28" height="30" viewBox="0 0 28 30"><path d="M3 20V8C3 0 13 0 13 8V21C13 29 25 29 25 21V9" fill="none" stroke="#fff" stroke-width="4" stroke-linecap="round"/></svg></button>
    <button class="running" aria-label="画图"><svg width="30" height="30" viewBox="0 0 30 30"><path d="M15 4c8 0 14 5 14 12 0 9-8 12-13 12-3 0-2-4-4-6s-6 2-9 0C-1 16 6 4 15 4z" fill="#bfe0f2" stroke="#6fa3bf"/><circle cx="7" cy="14" r="2.500" fill="#e2452f"/><circle cx="12" cy="9" r="2.500" fill="#59b548"/><circle cx="20" cy="9" r="2.300" fill="#f2c021"/><circle cx="12" cy="19" r="2" fill="#222"/><path d="M28 3L17 28" stroke="#d28a34" stroke-width="2.600"/><path d="M24 0l6 3-4 7-3-2z" fill="#a87645"/></svg></button>
    <button class="running" aria-label="Word"><svg width="28" height="28" viewBox="0 0 28 28"><path d="M13 4h15v20H13z" fill="#fff" stroke="#2b579a"/><path d="M17 8h8M17 11h8M17 14h8M17 17h8M17 20h8" stroke="#2b579a" stroke-width="1.400"/><path d="M0 3l17-3v28L0 25z" fill="#2b579a"/><path d="M3 9l2.500 10L8.500 10l2.500 9L14 9" fill="none" stroke="#fff" stroke-width="2"/></svg></button>
    <button class="running current" aria-label="AutoCAD"><svg width="30" height="30" viewBox="0 0 30 30"><path d="M0 0h30v30H0z" fill="#e0453c"/><path d="M0 0h16L0 26z" fill="#f7b5ad"/><path d="M12 2h6l8 18-7 3-4-6-5 6-6-4z" fill="#ba1b11"/><path d="M14 2L5 20l5 3 5-8z" fill="#f3604c"/><path d="M15 13l5 8h-9z" fill="#3d0704"/></svg></button>
    <button class="running" aria-label="照片"><svg width="28" height="28" viewBox="0 0 28 28"><path d="M1 1h26v26H1z" fill="none" stroke="#fff" stroke-width="2"/><path d="M1 21l8-14 7 9 4-4 7 9v6H1z" fill="#fff"/><path d="M16 12l5 9" stroke="#000"/></svg></button>
  </div>
  <div class="systray">
    <button class="people" aria-label="人脉"><svg width="20" height="20" fill="none" stroke="#fff" stroke-width="1.500"><circle cx="13" cy="4.500" r="3"/><circle cx="6" cy="10" r="2.500"/><path d="M8 8c4 0 10-1 11 7M1 19c0-7 10-7 10 0"/></svg></button>
    <button aria-label="显示隐藏的图标"><svg width="16" height="10"><path d="M1 9l7-7 7 7" fill="none" stroke="#fff" stroke-width="1.500"/></svg></button>
    <button aria-label="音量"><svg width="22" height="18" fill="none" stroke="#fff" stroke-width="1.200"><path d="M1 6h3l5-4v14l-5-4H1zM12 6c2 2 2 4 0 6M14 4c3 3 3 7 0 10"/><path d="M17 2c4 4 4 10 0 14" stroke="#888"/></svg></button>
    <button aria-label="网络"><svg width="22" height="18" fill="none" stroke="#fff" stroke-width="1.200"><path d="M7 2h14v11H5M1 1h5v5H1zM3.500 6v10M8 16h9M13 13v3"/></svg></button>
    <button class="ime">英</button>
    <button aria-label="搜狗"><svg width="20" height="20" viewBox="0 0 20 20"><rect x="1" y="1" width="18" height="18" rx="3" fill="#f15a29" transform="rotate(-6 10 10)"/><path d="M14 6c-3-2-8-1-8 1.500S14 10 14 13s-6 3-9 1" fill="none" stroke="#fff" stroke-width="2.600"/></svg></button>
    <time>19:56<br>2019/5/6</time>
    <button class="notes" aria-label="通知"><svg width="20" height="20"><path d="M0 0h20v15H8l-4 4v-4H0z" fill="#fff"/><path d="M4 4h12M4 7.500h12M4 11h12" stroke="#111"/></svg><span>7</span></button>
  </div>
</footer>
</body>
</html>
```

FILE: styles.css
```css
* { box-sizing: border-box; }
html, body { height: 100%; }
body {
  margin: 0;
  display: flex;
  flex-direction: column;
  overflow: hidden;
  background: #686868;
  color: #333;
  font: 15px/20px "Noto Sans", "Noto Sans CJK SC", sans-serif;
}
button, input, select { font: inherit; color: inherit; margin: 0; padding: 0; border: 0; background: none; border-radius: 0; }
button { display: flex; align-items: center; justify-content: center; }
select { appearance: none; outline: 0; }
input { outline: 0; min-width: 0; }
svg { display: block; flex: none; overflow: visible; }
h2, h3, p { margin: 0; font-weight: 400; font-size: 15px; }
a { color: inherit; text-decoration: none; }
.defs { position: absolute; width: 0; height: 0; }

/* Title bar */
.titlebar { display: flex; height: 30px; flex: none; background: #fff; color: #000; }
.app-button {
  width: 41px; height: 41px; gap: 3px; flex: none; position: relative; z-index: 2;
  border: 1px solid #000; color: #333;
  background: linear-gradient(#d0d0d0, #8c8c8c 50%, #7a7a7a);
}
.app-button svg:first-child { margin-left: 2px; }
.qat, .infocenter {
  display: flex; align-items: center; border-top: 2px solid #666; border-bottom: 1px solid #666;
  background: linear-gradient(#8e8e8e, #585858);
}
.qat { padding-left: 5px; }
.qat > button { width: 30px; height: 26px; }
.arrow { color: #444; }
.qat .arrow { margin: 0 4px; }
.workspace-pick { display: flex; align-items: center; width: 223px; height: 26px; margin-left: 2px; padding: 0 2px 0 4px; gap: 2px; background: linear-gradient(#ededed, #cfcfcf); }
.workspace-pick select { flex: 1; }
.sel-arrow { color: #444; }
.qat > .qat-more { width: 20px; background: linear-gradient(#6e6e6e, #8e8e8e); border-left: 1px solid #555; }
.doc-title { flex: 1; text-align: center; line-height: 31px; white-space: nowrap; color: #111; }
.infocenter button { height: 26px; width: 30px; }
.infocenter .info-toggle { width: 18px; background: linear-gradient(#a8a8a8, #666); }
.infocenter input { width: 223px; height: 26px; padding: 0 4px; background: #f7f7f7; }
.infocenter input::placeholder { color: #777; font-style: italic; opacity: 1; font-size: 14px; }
.infocenter .login { width: 137px; color: #fff; gap: 7px; justify-content: flex-start; padding-left: 6px; }
.infocenter .arrow { margin: 0 5px; }
.infocenter .login + .arrow { margin-left: 0; }
.rule { width: 1px; height: 22px; margin: 0 6px; background: #a5a5a5; }
.window-buttons { display: flex; width: 205px; padding-left: 28px; }
.window-buttons button { width: 58px; height: 26px; }

/* Ribbon tabs */
.ribbon-tabs { display: flex; height: 24px; flex: none; background: #404040; color: #fff; padding-left: 57px; line-height: 26px; }
.ribbon-tabs a { padding: 0 12px; white-space: nowrap; }
.ribbon-tabs .active { padding: 0 10px; margin: 3px 1px 0; line-height: 21px; color: #222; background: linear-gradient(#e3e3e3, #fff); border: 1px solid #fff; border-bottom: 0; border-radius: 2px 2px 0 0; }
.ribbon-min { margin-left: 30px; width: 30px; }

/* Ribbon */
.ribbon { display: flex; flex: none; border: solid #fff; border-width: 1px 1px 1px 2px; background: #fff; height: 125px; }
.panel { display: flex; flex-direction: column; flex: none; border-right: 1px solid #999; }
.panel:first-child { margin-left: -2px; }
.panel-body { display: flex; gap: 2px; height: 100px; padding: 5px 3px 0; }
.panel h2 { position: relative; display: flex; justify-content: center; align-items: center; gap: 4px; height: 23px; margin: 0 1px; padding-bottom: 2px; background: #eee; border: solid #ccc; border-width: 1px 0; }
.panel .with-launcher { padding-right: 14px; }
.panel:nth-child(-n+2) h2 { gap: 8px; }
.launcher { position: absolute; right: 4px; }
.big { position: relative; flex-direction: column; justify-content: flex-start; line-height: 20px; padding-top: 2px; white-space: nowrap; }
.big > svg:first-child { height: 40px; margin-bottom: 3px; }
.big > span + svg { margin-top: 4px; }
.big > .side-arrow { position: absolute; right: 4px; bottom: 26px; }
.mtext { width: 59px; }
.spell { width: 45px; }
.dimbig { width: 56px; }
.leader { width: 66px; }
.tbl { width: 46px; }
.wipe { width: 66px; }
.cloud { width: 46px; }
.scale-add { width: 118px; }
.abc { font: 700 14px "Liberation Sans", sans-serif; fill: #4b4f55; text-anchor: middle; }
.abc-s { font: 700 8px "Liberation Sans", sans-serif; fill: #333; text-anchor: middle; }
.stack { display: flex; flex-direction: column; gap: 3px; }
.combo { display: flex; align-items: center; width: 250px; height: 28px; padding: 0 2px 0 3px; border: 1px solid #c6c6c6; background: linear-gradient(#f8f8f8, #ebebeb); }
.combo select, .combo input { flex: 1; }
.find { background: #fff; padding-right: 1px; border-color: #b5b5b5; }
.find input::placeholder { color: #777; font-style: italic; opacity: 1; font-size: 14px; }
.tools { display: flex; gap: 6px; }
.tool-group { display: flex; border: 1px solid #c8c8c8; background: linear-gradient(#fafafa, #e6e6e6); }
.tool-group button { width: 28px; height: 25px; }
.tool-group button + button { width: 29px; border-left: 1px solid #c8c8c8; }
.tool-group .slim:last-child { width: 14px; }
.rows { display: flex; flex-direction: column; width: 132px; padding-left: 2px; margin-top: -1px; }
.rows button { height: 31px; gap: 6px; justify-content: flex-start; white-space: nowrap; }
.ribbon-rest { flex: 1; margin-right: 1px; background: linear-gradient(#d6d6d6, #8e8e8e); }

/* Workspace */
.workspace { display: flex; gap: 5px; flex: 1; min-height: 0; padding: 5px 2px 1px 0; border-bottom: 1px solid #000; }
.palette { width: 139px; flex: none; display: flex; flex-direction: column; margin-bottom: 2px; background: #f0f0f0; color: #000; border-radius: 4px; overflow: hidden; }
.palette h3 { height: 25px; padding-left: 11px; line-height: 27px; background: #a0a0a0; border-left: 1px dotted #333; }
.palette button { position: relative; width: 100%; height: 18px; justify-content: flex-start; padding-left: 3px; gap: 5px; white-space: nowrap; }
.tree { padding-top: 7px; }
.tree button::before, .sub::before { content: ""; width: 0; margin: 0 11px 0 5px; border: solid transparent; border-width: 5px 0 5px 5px; border-left-color: #2a62a0; }
.palette .tree button, .palette .sub { gap: 0; }
.sub::before { border-left-color: #0d7f7a; }
.tree .open::before { margin: 0 8px 0 3px; border-width: 5px 5px 0; border-color: #2a62a0 transparent transparent; }
.commands { padding-top: 2px; background: #eef0ea; border-top: 2px solid #777; border-bottom: 1px solid #fff; }
.set + .set { padding-top: 2px; border-top: 2px solid #a0a09c; }
.set { padding-bottom: 2px; }
.lower { padding-top: 0; }
.document { flex: 1; min-width: 0; display: flex; flex-direction: column; border-left: 1px solid #aaa; }
.view-row { display: flex; flex: 1; min-height: 0; }
.canvas { position: relative; flex: 1; background: #fff; }
.viewport-label { padding: 4px 3px; font: 13px/18px "Liberation Sans", "Noto Sans CJK SC", sans-serif; color: #000; }
.stair { position: absolute; left: 695px; top: 276px; }
.line, .slope, .edit { fill: none; stroke: #000; stroke-width: 3; shape-rendering: crispEdges; }
.slope { shape-rendering: auto; stroke-width: 3; }
.edit { stroke: #ffb56b; }
.dims text { font: 11px "Liberation Sans", sans-serif; fill: #000; }
.dims .vert { font-size: 10px; font-weight: 700; }
.dims .wide { font: 13px "Liberation Sans", sans-serif; }
.crosshair { position: absolute; left: 1407px; top: 500px; }
.crosshair path, .ucs path { fill: none; stroke: #000; shape-rendering: crispEdges; }
.ucs { position: absolute; left: 10px; bottom: 11px; }
.ucs text { font: 18px "Liberation Sans", sans-serif; }
.doc-buttons { position: absolute; top: 8px; right: 10px; display: flex; gap: 6px; }
.viewcube { position: absolute; right: 19px; top: 38px; display: flex; flex-direction: column; align-items: center; gap: 19px; }
.compass { font: 700 18px "Noto Sans CJK SC", sans-serif; text-anchor: middle; fill: #d8d8d8; stroke: #a5a5a5; stroke-width: 1px; }
.wcs { width: 48px; height: 18px; gap: 4px; border-radius: 4px; background: #ebebf3; color: #777; font: 12px/18px "Liberation Sans", sans-serif; }
.navbar { position: absolute; right: 3px; top: 234px; width: 36px; height: 216px; padding: 2px 2px; border: 2px solid #c4c4c4; border-radius: 5px; background: #f5f5f5; }
.history { position: absolute; left: 435px; bottom: 35px; display: flex; flex-direction: column; align-items: flex-start; gap: 6px; color: #fff; }
.history p { height: 23px; padding: 0 3px; border-radius: 3px; font: 18px/23px "DejaVu Sans Mono", "Noto Sans CJK SC", monospace; white-space: pre; }
.history b { font: 20px/20px "Noto Sans CJK SC", sans-serif; }
.h1 { background: #b4b4b4; }
.h2 { background: #a6a6a6; }
.h3 { background: #999; }
.command-line { position: absolute; left: 361px; right: 340px; bottom: -3px; z-index: 2; display: flex; align-items: center; height: 34px; padding-right: 6px; background: #fff; border: 1px solid #999; border-radius: 3px; overflow: hidden; }
.command-grip { display: flex; align-items: center; justify-content: space-between; width: 67px; height: 100%; padding: 0 6px 0 4px; background: linear-gradient(#a4a4a4, #737373); }
.prompt { margin: 0 4px 0 5px; }
.faint { color: #aaa; }
.command-line input { flex: 1; padding-left: 9px; height: 100%; font-size: 20px; }
.command-line input::placeholder { color: #aaa; font-style: italic; opacity: 1; }
.vscroll, .hscroll { display: flex; background: #f0f0f0; }
.vscroll { flex-direction: column; width: 20px; }
.vscroll button { height: 22px; }
.vscroll path, .hscroll path { fill: none; stroke: #444; stroke-width: 2; }
.before { flex: 515; }
.after { flex: 226; }
.thumb { flex: 0 0 21px; background: #cdcdcd; }
.sheet-row { display: flex; height: 20px; flex: none; background: #f0f0f0; color: #000; border-bottom: 1px solid #fff; }
.nav { width: 18px; border: solid #aaa; border-width: 1px 1px 1px 0; border-top-color: #666; }
.edge { background: #f0f0f0; }
.sheet { font: 14px/18px "Liberation Sans", "Noto Sans CJK SC", sans-serif; width: 42px; }
.sheet:not(.current) { width: 50px; border-top: 1px solid #666; }
.sheet.current { background: #fff; }
.sheet-gap { flex: 1; border-top: 1px solid #666; }
.hscroll { width: 616px; padding-right: 20px; }
.split { flex: 0 0 6px; background: #cdcdcd; }
.hscroll button { width: 22px; }
.hscroll .before { flex: 420; }
.hscroll .after { flex: 103; }

/* Status bar */
.statusbar { display: flex; height: 21px; flex: none; padding: 0 4px 0 5px; color: #000; background: linear-gradient(#a0a0a0, #7c7c7c); font: 14px/20px "Liberation Sans", "Noto Sans CJK SC", sans-serif; }
.statusbar .scale { width: 98px; padding: 0 4px 0 2px; justify-content: space-between; background: #b5b5b5; font-size: 15px; }
.statusbar output { width: 267px; padding-left: 9px; font: 13px/22px "DejaVu Sans Mono", monospace; }
.toggles { display: flex; }
.toggles button { width: 22px; border-right: 1px solid #777; background: linear-gradient(#c6c6c6, #a8a8a8); white-space: nowrap; }
.toggles .on { background: linear-gradient(#def2f8, #93cbdc 50%, #b7e0ec); }
.status-fill { flex: 1; }
.toggles .word { width: auto; padding: 0 4px 0 3px; }
.toggles .anno { width: 60px; gap: 3px; }
.toggles .dim svg { opacity: 0.4; }
.toggles .slim { width: 11px; }
.gap { width: 6px; }
.gap.wide { width: 22px; }
.tray { display: flex; align-items: center; gap: 6px; width: 52px; padding-left: 5px; border: 1px solid #555; background: #aaa; }

/* Taskbar */
.taskbar { display: flex; height: 50px; flex: none; background: #0a0809; color: #fff; }
.start { width: 60px; }
.search { display: flex; align-items: center; width: 430px; padding: 0 18px 0 11px; background: #f2f2f2; color: #222; }
.search input { flex: 1; height: 100%; padding-left: 11px; font-size: 19px; }
.search input::placeholder { color: #333; opacity: 1; }
.apps { display: flex; flex: 1; }
.apps button { position: relative; width: 62px; height: 50px; }
.running::after { content: ""; position: absolute; left: 6px; right: 6px; bottom: 0; height: 3px; background: #76b9ed; }
.current.running { background: #3c3a3b; }
.current.running::after { left: 0; right: 0; }
.systray { display: flex; align-items: center; margin-right: 5px; padding-right: 14px; border-right: 1px solid #777; }
.systray button { width: 30px; height: 50px; }
.systray .people { width: 44px; margin-right: 8px; }
.systray .ime { font-size: 17px; font-weight: 700; }
.systray .ime + button { width: 42px; }
.systray time { width: 98px; text-align: center; font: 16px/22px "Noto Sans", sans-serif; }
.systray .notes { position: relative; width: 42px; }
.notes span { position: absolute; right: -4px; bottom: 5px; width: 21px; height: 21px; border: 1px solid #999; border-radius: 50%; background: #333; font: 700 14px/19px "Noto Sans", sans-serif; }
```
